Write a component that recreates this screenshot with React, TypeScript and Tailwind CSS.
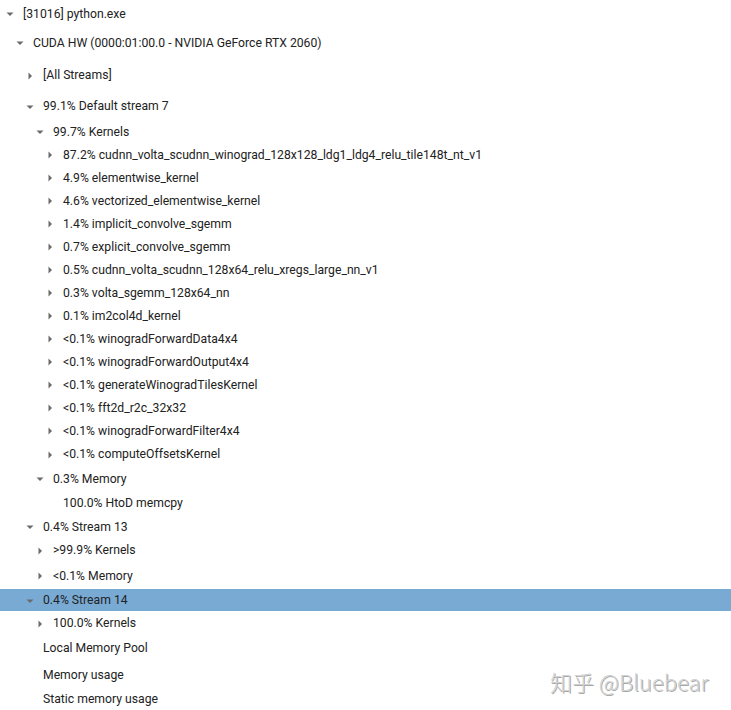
import React from 'react';

type Row = {
  label: string;
  depth: number;
  arrow?: 'down' | 'right';
  y: number; // row centre in the reference
  selected?: boolean;
};

const rows: Row[] = [
  { label: '[31016] python.exe', depth: 0, arrow: 'down', y: 14 },
  { label: 'CUDA HW (0000:01:00.0 - NVIDIA GeForce RTX 2060)', depth: 1, arrow: 'down', y: 40 },
  { label: '[All Streams]', depth: 2, arrow: 'right', y: 75 },
  { label: '99.1% Default stream 7', depth: 2, arrow: 'down', y: 108 },
  { label: '99.7% Kernels', depth: 3, arrow: 'down', y: 131 },
  { label: '87.2% cudnn_volta_scudnn_winograd_128x128_ldg1_ldg4_relu_tile148t_nt_v1', depth: 4, arrow: 'right', y: 154 },
  { label: '4.9% elementwise_kernel', depth: 4, arrow: 'right', y: 177 },
  { label: '4.6% vectorized_elementwise_kernel', depth: 4, arrow: 'right', y: 200 },
  { label: '1.4% implicit_convolve_sgemm', depth: 4, arrow: 'right', y: 223 },
  { label: '0.7% explicit_convolve_sgemm', depth: 4, arrow: 'right', y: 246 },
  { label: '0.5% cudnn_volta_scudnn_128x64_relu_xregs_large_nn_v1', depth: 4, arrow: 'right', y: 269 },
  { label: '0.3% volta_sgemm_128x64_nn', depth: 4, arrow: 'right', y: 292 },
  { label: '0.1% im2col4d_kernel', depth: 4, arrow: 'right', y: 315 },
  { label: '<0.1% winogradForwardData4x4', depth: 4, arrow: 'right', y: 338 },
  { label: '<0.1% winogradForwardOutput4x4', depth: 4, arrow: 'right', y: 361 },
  { label: '<0.1% generateWinogradTilesKernel', depth: 4, arrow: 'right', y: 384 },
  { label: '<0.1% fft2d_r2c_32x32', depth: 4, arrow: 'right', y: 407 },
  { label: '<0.1% winogradForwardFilter4x4', depth: 4, arrow: 'right', y: 430 },
  { label: '<0.1% computeOffsetsKernel', depth: 4, arrow: 'right', y: 453 },
  { label: '0.3% Memory', depth: 3, arrow: 'down', y: 479 },
  { label: '100.0% HtoD memcpy', depth: 4, y: 503 },
  { label: '0.4% Stream 13', depth: 2, arrow: 'down', y: 526 },
  { label: '>99.9% Kernels', depth: 3, arrow: 'right', y: 549 },
  { label: '<0.1% Memory', depth: 3, arrow: 'right', y: 574 },
  { label: '0.4% Stream 14', depth: 2, arrow: 'down', y: 600, selected: true },
  { label: '100.0% Kernels', depth: 3, arrow: 'right', y: 622 },
  { label: 'Local Memory Pool', depth: 2, y: 647 },
  { label: 'Memory usage', depth: 2, y: 674 },
  { label: 'Static memory usage', depth: 2, y: 701 },
];

const indent = ['pl-[6px]', 'pl-[16px]', 'pl-[26px]', 'pl-[36px]', 'pl-[46px]'];

function Arrow({ dir }: { dir?: 'down' | 'right' }) {
  if (!dir) return <span className="w-[8px] shrink-0" />;
  return (
    <svg width="8" height="8" viewBox="0 0 8 8" className="shrink-0 text-[#6b6b6b]">
      {dir === 'down' ? (
        <path d="M0.5 2.5 L7.5 2.5 L4 6 Z" fill="currentColor" />
      ) : (
        <path d="M2.5 0.5 L6 4 L2.5 7.5 Z" fill="currentColor" />
      )}
    </svg>
  );
}

function TreeRow({ row, height }: { row: Row; height: number }) {
  return (
    <div
      className={`flex items-center gap-[9px] pt-[1px] ${indent[row.depth]} ${row.selected ? 'bg-[#78aad4]' : ''}`}
      style={{ height }}
    >
      <Arrow dir={row.arrow} />
      <span className="whitespace-nowrap text-[12.2px] text-[#222]">{row.label}</span>
    </div>
  );
}

export default function App() {
  // row edges sit halfway between neighbouring centres, except around the selected row
  const edges: number[] = [0];
  for (let i = 0; i < rows.length - 1; i++) {
    let e = Math.round((rows[i].y + rows[i + 1].y) / 2);
    if (rows[i + 1].selected) e = 589;
    if (rows[i].selected) e = 611;
    edges.push(e);
  }
  edges.push(710);

  return (
    <div
      className="relative w-[731px] h-[710px] overflow-hidden bg-white"
      style={{ fontFamily: 'Roboto, "Noto Sans", sans-serif' }}
    >
      {rows.map((r, i) => (
        <TreeRow key={i} row={r} height={edges[i + 1] - edges[i]} />
      ))}
      <div
        className="absolute left-[550px] top-[665px] text-[22px] font-light text-[#d2d2d2] whitespace-nowrap"
        style={{ fontFamily: '"Noto Sans CJK SC", "Noto Sans", sans-serif', textShadow: '1px 1px 0 #a8a8a8' }}
      >
        知乎 @Bluebear
      </div>
    </div>
  );
}
